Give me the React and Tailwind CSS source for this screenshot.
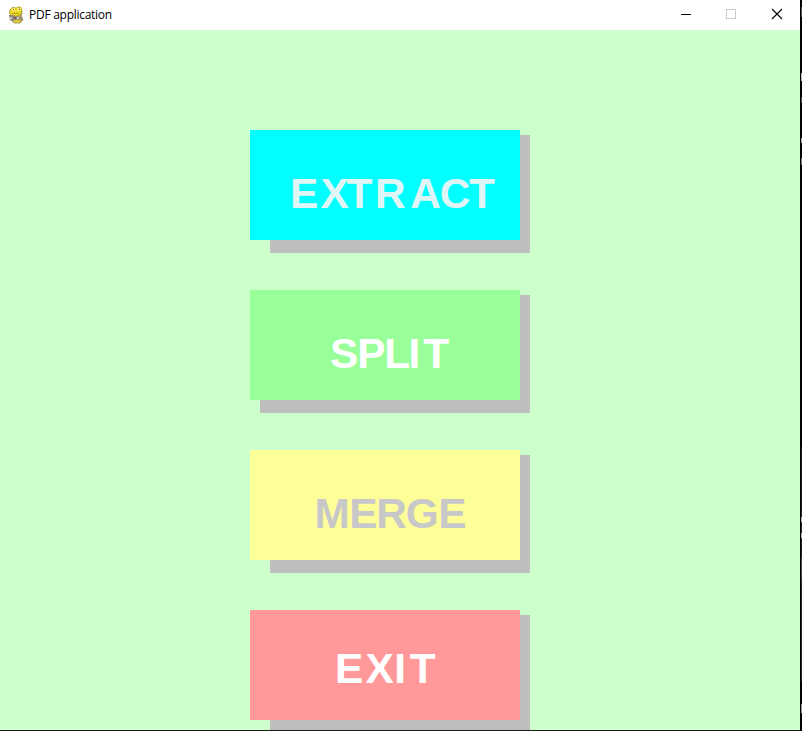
const buttons = [
  {
    name: "extract",
    face: "bg-[#00ffff] text-[#e0f5f5] pl-[40px] pt-[39px]",
    shadow: "ml-[20px]",
    letters: [["E", "w-[30.6px]"], ["X", "w-[26px]"], ["T", "w-[28.4px]"], ["R", "w-[35.2px]"], ["A", "w-[29.6px]"], ["C", "w-[29.2px]"], ["T", "w-[27px]"]],
  },
  {
    name: "split",
    face: "bg-[#99ff99] text-white pl-[80px] pt-[39px]",
    shadow: "ml-[10px]",
    letters: [["S", "w-[27.3px]"], ["P", "w-[26.9px]"], ["L", "w-[24.4px]"], ["I", "w-[14.6px]"], ["T", "w-[27px]"]],
  },
  {
    name: "merge",
    face: "bg-[#ffff99] text-[#c8c8c8] pl-[64.5px] pt-[39px]",
    shadow: "ml-[20px]",
    letters: [["M", "w-[34.7px]"], ["E", "w-[27px]"], ["R", "w-[29.6px]"], ["G", "w-[32.4px]"], ["E", "w-[29px]"]],
  },
  {
    name: "exit",
    face: "bg-[#ff9999] text-white pl-[85px] pt-[34px]",
    shadow: "ml-[20px]",
    letters: [["E", "w-[30.5px]"], ["X", "w-[28.8px]"], ["I", "w-[15.4px]"], ["T", "w-[27px]"]],
  },
];

function SnakeIcon() {
  return (
    <svg className="h-[18px] w-[16px] shrink-0" viewBox="0 0 16 18">
      <path d="M2.5 9 3 14l3 3h6l3-3-1.500-4 .5-5-2-2z" fill="#c6b440" stroke="#8b8350" strokeWidth=".7" />
      <path d="M2 4 4 1.500h2.500l1.500.8 2-1.300h2.500L14 4l-1 4-3 2H4L1.500 7.500z" fill="#efd927" stroke="#9b8b20" strokeWidth=".7" />
      <circle cx="5.500" cy="3.500" r="1.600" fill="#fff08a" />
      <circle cx="11" cy="3.500" r="1.600" fill="#fff08a" />
      <path d="M5 3h1v1H5zM11 3h1v1h-1z" fill="#6b601c" />
      <path d="M4 7.400h7" stroke="#9b8b20" strokeWidth=".7" />
      <path d="M1 9h4l2 1.500h5l2 1v2H8l-2 1H2z" fill="#8c8682" />
      <path d="M2 11h2v2H2zM9 11h2v2H9z" fill="#d0cdca" />
      <path d="M6 11h2v2H6z" fill="#85564d" />
      <path d="M6 15.500h6" stroke="#e5d53a" strokeWidth="1.600" />
    </svg>
  );
}

function MenuButton({ name, face, shadow, letters }) {
  return (
    <div className="grid h-[123px] w-[280px] shrink-0">
      <div className={`col-start-1 row-start-1 mt-[5px] bg-[#bebebe] ${shadow}`} />
      <button
        aria-label={name}
        className={`z-10 col-start-1 row-start-1 flex h-[110px] w-[270px] items-start whitespace-nowrap text-left font-['Liberation_Sans',sans-serif] text-[42.4px] leading-[50px] font-bold ${face}`}
      >
        {letters.map(([letter, width], i) => (
          <span key={i} className={`shrink-0 ${width}`}>{letter}</span>
        ))}
      </button>
    </div>
  );
}

export default function App() {
  return (
    <div className="flex h-[731px] w-[802px] overflow-hidden bg-black">
      <div className="flex w-[800px] shrink-0 flex-col border-b border-[#1c1c1c] bg-[#ccffcc]">
        <header className="flex h-[30px] shrink-0 items-center bg-white pl-[8px]">
          <SnakeIcon />
          <span className="ml-[5px] whitespace-nowrap font-['Open_Sans',sans-serif] text-[12px] leading-[16px] tracking-[-0.27px] text-black">PDF application</span>
          <svg className="ml-auto h-[30px] w-[138px]" viewBox="0 0 138 30" fill="none" shapeRendering="crispEdges">
            <path d="M19 14.5h10" stroke="#000" />
            <path d="M64.5 9.5h9v9h-9z" stroke="#cccccc" />
            <path d="m110 9 10 10m0-10-10 10" stroke="#000" shapeRendering="auto" strokeWidth="1.1" />
          </svg>
        </header>
        <main className="flex h-[700px] flex-col gap-[37px] overflow-hidden pt-[100px] pl-[250px]">
          {buttons.map((b) => <MenuButton key={b.name} {...b} />)}
        </main>
      </div>
      <div className="flex w-[2px] flex-col pl-px">
        <div className="mt-[7px] h-[10px] bg-[#555555]" />
        <div className="mt-[56px] h-[8px] bg-[#bbbbbb]" />
        <div className="mt-[16px] h-[6px] bg-[#444444]" />
        <div className="mt-[35px] h-[5px] bg-[#aaaaaa]" />
        <div className="mt-[15px] h-[7px] bg-[#777777]" />
        <div className="mt-[282px] h-[70px] bg-[#222222]" />
        <div className="h-[5px] bg-[#bbbbbb]" />
        <div className="h-[11px] bg-[#222222]" />
        <div className="h-[5px] bg-[#bbbbbb]" />
        <div className="h-[19px] bg-[#222222]" />
        <div className="h-[24px] bg-[#444444]" />
        <div className="h-[101px] bg-[#292929]" />
        <div className="mt-[22px] h-[9px] bg-[#999999]" />
      </div>
    </div>
  );
}
